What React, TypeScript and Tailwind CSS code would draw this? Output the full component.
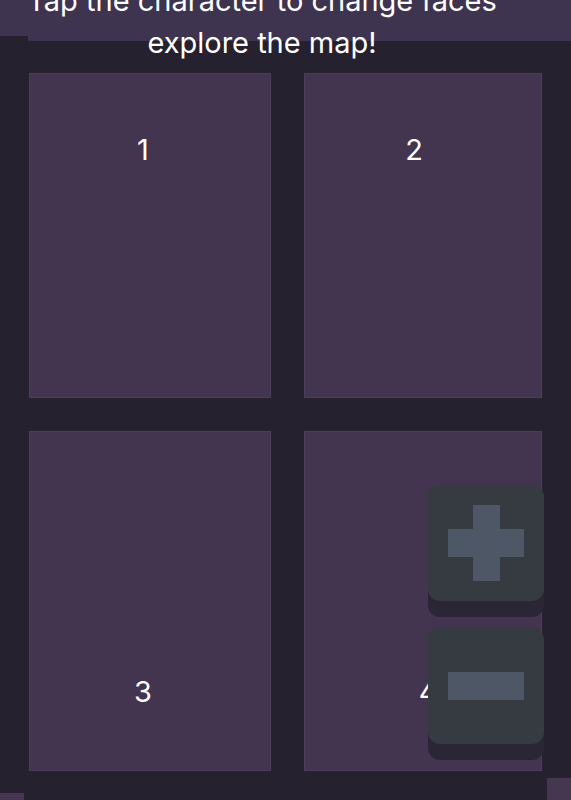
import React from 'react';

const cells = [
  { n: '1', align: 'items-start pt-[58px]', pad: 'pr-[14px]' },
  { n: '2', align: 'items-start pt-[58px]', pad: 'pr-[18px]' },
  { n: '3', align: 'items-end pb-[60px]', pad: 'pr-[14px]' },
  { n: '4', align: 'items-end pb-[60px]', pad: 'pl-[10px]' },
];

const ZoomButton: React.FC<{ kind: 'plus' | 'minus' }> = ({ kind }) => (
  <button className="relative flex h-[116px] w-[116px] items-center justify-center rounded-[12px] bg-[#363a41] shadow-[0_16px_0_#2b2636]">
    <span className="absolute h-[28px] w-[76px] bg-[#4e5766]" />
    {kind === 'plus' && <span className="absolute h-[76px] w-[27px] bg-[#4e5766]" />}
  </button>
);

export default function App() {
  return (
    <div
      className="relative h-[800px] w-[571px] overflow-hidden bg-[#26212f] text-white"
      style={{ fontFamily: 'Inter, "Noto Sans", sans-serif' }}
    >
      {/* banner */}
      <div className="flex items-start">
        <div className="h-[36px] w-[28px] bg-[#3e3450]" />
        <div className="h-[41px] flex-1 bg-[#3e3450]" />
      </div>
      <p className="absolute inset-x-0 top-[-20px] pr-[47px] text-center text-[29px] leading-[42px]">
        Tap the character to change faces
        <br />
        explore the map!
      </p>

      {/* map quadrants */}
      <div className="ml-[29px] mt-[32px] grid grid-cols-[242px_238px] grid-rows-[325px_340px] gap-[33px]">
        {cells.map((c) => (
          <div
            key={c.n}
            className={`flex justify-center border border-[#4a3e5a] bg-[#43344f] ${c.align} ${c.pad}`}
          >
            <span className="text-[29px] leading-[36px]">{c.n}</span>
          </div>
        ))}
      </div>

      {/* zoom controls */}
      <div className="absolute right-[27px] top-[485px] flex flex-col gap-[27px]">
        <ZoomButton kind="plus" />
        <ZoomButton kind="minus" />
      </div>

      <div className="absolute bottom-0 left-0 h-[7px] w-[24px] bg-[#45374f]" />
      <div className="absolute bottom-0 right-0 h-[22px] w-[24px] bg-[#45374f]" />
    </div>
  );
}
